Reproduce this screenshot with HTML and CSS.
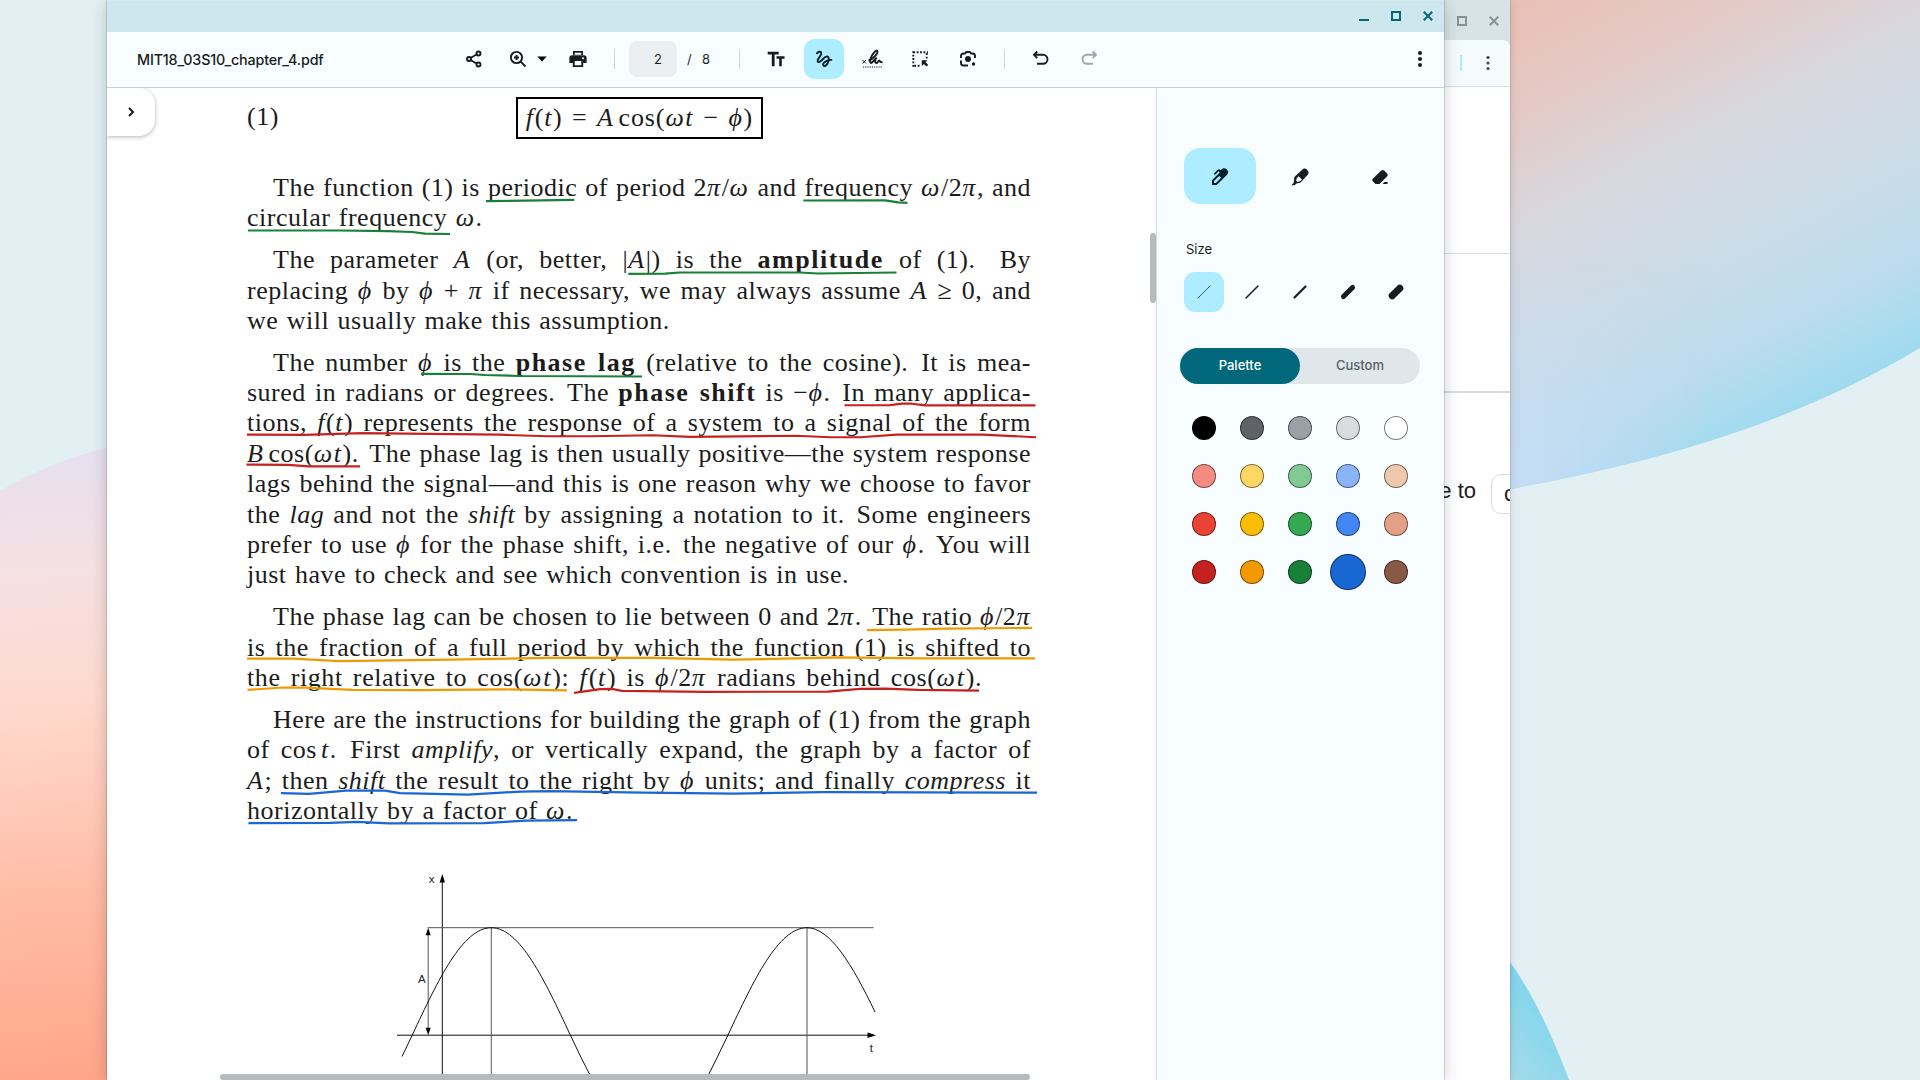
FILE: index.html
```html
<!DOCTYPE html>
<html lang="en">
<head>
<meta charset="utf-8">
<title>MIT18_03S10_chapter_4.pdf</title>
<link rel="stylesheet" href="styles.css">
</head>
<body>
<div class="desktop">
  <svg class="wallpaper" viewBox="0 0 1920 1080">
    <defs>
      <linearGradient id="wl" gradientUnits="userSpaceOnUse" x1="0" y1="470" x2="50" y2="1080">
        <stop offset="0" stop-color="#e8e0ee"/><stop offset=".18" stop-color="#f6e0e2"/><stop offset=".4" stop-color="#ffd8cc"/><stop offset=".7" stop-color="#ffbca6"/><stop offset="1" stop-color="#ffa68a"/>
      </linearGradient>
      <linearGradient id="wr" gradientUnits="userSpaceOnUse" x1="1530" y1="0" x2="1760" y2="440">
        <stop offset="0" stop-color="#e9c0b7"/><stop offset=".18" stop-color="#e5c9c4"/><stop offset=".4" stop-color="#d7d7de"/><stop offset=".62" stop-color="#cbdbe6"/><stop offset=".82" stop-color="#bcdcee"/><stop offset="1" stop-color="#9cdaef"/>
      </linearGradient>
      <linearGradient id="wb" gradientUnits="userSpaceOnUse" x1="1560" y1="1010" x2="1500" y2="1060">
        <stop offset="0" stop-color="#7fd4ec"/><stop offset="1" stop-color="#a2dbea"/>
      </linearGradient>
      <linearGradient id="wv" gradientUnits="userSpaceOnUse" x1="1510" y1="0" x2="1720" y2="0">
        <stop offset="0" stop-color="#c8dcf6" stop-opacity=".8"/><stop offset="1" stop-color="#c8dcf6" stop-opacity="0"/>
      </linearGradient>
      <linearGradient id="wm" gradientUnits="userSpaceOnUse" x1="0" y1="260" x2="0" y2="480">
        <stop offset="0" stop-color="#000"/><stop offset="1" stop-color="#fff"/>
      </linearGradient>
      <mask id="fade"><path fill="url(#wm)" d="M1500 0h420v500h-420z"/></mask>
    </defs>
    <path fill="url(#wl)" d="M0 491Q52 461 106 448L130 444V1080H0Z"/>
    <path fill="url(#wr)" d="M1500 0H1920V348Q1840 396 1740 431Q1640 466 1500 491Z"/>
    <path fill="url(#wv)" mask="url(#fade)" d="M1500 0H1920V348Q1840 396 1740 431Q1640 466 1500 491Z"/>
    <path fill="url(#wb)" d="M1500 950L1510 962Q1541 1005 1569 1080H1500Z"/>
  </svg>

  <section class="window back">
    <div class="back-title">
      <svg class="ctl" viewBox="0 0 10 10"><path d="M1 1h8v8H1z"/></svg>
      <svg class="ctl" viewBox="0 0 10 10"><path d="M.8 .8l8.4 8.4M9.2 .8L.8 9.2"/></svg>
    </div>
    <div class="back-bar"><i class="accent"></i><svg class="dots" viewBox="0 0 4 16"><circle cx="2" cy="2.5" r="1.6"/><circle cx="2" cy="8" r="1.6"/><circle cx="2" cy="13.5" r="1.6"/></svg></div>
    <div class="back-head"></div>
    <div class="back-mid"></div>
    <div class="back-row"><span>e to</span><span class="chip">c</span></div>
  </section>

  <section class="window front">
    <header class="titlebar">
      <svg class="ctl" viewBox="0 0 10 10"><path d="M0 9h10"/></svg>
      <svg class="ctl" viewBox="0 0 10 10"><path d="M1 1h8v8H1z"/></svg>
      <svg class="ctl" viewBox="0 0 10 10"><path d="M.8 .8l8.4 8.4M9.2 .8L.8 9.2"/></svg>
    </header>

    <nav class="toolbar">
      <span class="filename">MIT18_03S10_chapter_4.pdf</span>
      <svg class="icon share" viewBox="0 0 20 20"><path class="ln" d="M6.500 9l6-3.500M6.500 11l6 3.500"/><circle class="ln" cx="5" cy="10" r="2"/><circle class="ln" cx="14.500" cy="4.500" r="2"/><circle class="ln" cx="14.500" cy="15.500" r="2"/></svg>
      <svg class="icon zoom" viewBox="0 0 20 20"><circle class="ln" cx="8.500" cy="8.500" r="5.600"/><path class="ln" d="M12.700 12.700l4.800 4.800M8.500 6v5M6 8.500h5"/></svg>
      <svg class="caret" viewBox="0 0 10 6"><path d="M.3 .5h9.400L5 5.500z"/></svg>
      <svg class="icon print" viewBox="0 0 20 20"><path fill-rule="evenodd" d="M5 2h10v4.500H5zM6.700 3.700v2h6.600v-2zM4 6.200h12a2.600 2.600 0 0 1 2.600 2.600V14H15.200v4H4.800v-4H1.400V8.800A2.600 2.600 0 0 1 4 6.200zM6.700 12v4.200h6.600V12zM15 8.200a1 1 0 1 0 0 2 1 1 0 0 0 0-2z"/></svg>
      <i class="sep sep1"></i>
      <span class="page-input">2</span><span class="slash">/</span><span class="total">8</span>
      <i class="sep sep2"></i>
      <svg class="icon tt" viewBox="0 0 20 20"><path d="M1.700 2.800h11v2.700H8.600v11.700H5.800V5.500H1.700zM10.500 7.300h8v2.400h-2.700v7.500h-2.600V9.700h-2.700z"/></svg>
      <span class="tool-on"><svg class="icon" viewBox="0 0 20 20"><path class="ln" d="M2.600 5C4 2.200 7 2 7.300 4.200 7.700 7 2.500 9.800 3.800 12.600 5.500 15.600 11.500 5.300 14 7.800c2.800 2.900-2.300 11.200-4.500 8.800-1.900-2.300 3.300-6.200 8.700-5.700"/></svg></span>
      <svg class="icon sign" viewBox="0 0 22 20"><path class="thin" d="M1.500 11l3.500 3.500M5 11l-3.500 3.500"/><path class="ln" d="M7.500 11.500C12 10.500 17.500 4.200 16.300 1.900 14.500-.4 8.300 9.500 9.300 13.300c1.200 2.600 4.300-3.500 6.200-4.600-1.700 2.300-1.800 5.300.2 5.300 1.300 0 1.500-2.500 2.500-2.500.7 0 .2 2.200 3.300 1.600"/><path class="dotline" d="M2 18h19"/></svg>
      <svg class="icon select" viewBox="0 0 20 20"><path class="dash" d="M3.300 2.300V18M3.300 3.200H18M16.700 4.300V10M4.300 16.700H10"/><path d="M11.800 11.300h5.700l-1.900 1.900 2.600 2.600-1.700 1.700-2.600-2.600-2.100 2.100z"/></svg>
      <svg class="icon lens" viewBox="0 0 20 20"><path class="ln" d="M3 9V7a2.500 2.500 0 0 1 2.500-2.500H7L8.300 3h3.400L13 4.500h1.500A2.500 2.500 0 0 1 17 7v2M3 11.500V14a2.500 2.500 0 0 0 2.500 2.500H10"/><circle cx="10" cy="10" r="3"/><circle cx="15.500" cy="15" r="1.700"/></svg>
      <i class="sep sep3"></i>
      <svg class="icon undo" viewBox="0 0 20 20"><path class="ln" d="M6.300 2.500L3 5.800l3.300 3.300M3.200 5.800H12a4.500 4.500 0 0 1 0 9H6"/></svg>
      <svg class="icon redo" viewBox="0 0 20 20"><path class="ln" d="M13.700 2.500L17 5.800l-3.300 3.300M16.800 5.800H8a4.500 4.500 0 0 0 0 9h6"/></svg>
      <svg class="icon more" viewBox="0 0 20 20"><circle cx="10" cy="4" r="2"/><circle cx="10" cy="10" r="2"/><circle cx="10" cy="16" r="2"/></svg>
    </nav>

    <div class="body">
      <main class="doc">
        <div class="tab"><svg viewBox="0 0 10 10"><path d="M3 1l4 4-4 4"/></svg></div>
        <div class="page">
          <div class="equation"><span>(1)</span><span class="boxed"><i>f</i>(<i>t</i>) = <i>A</i><span class="thinsp"></span>cos(<i>ωt</i> − <i>ϕ</i>)</span></div>
          <p>
            <span class="line in">The function (1) is periodic of period 2<i>π</i>/<i>ω</i> and frequency <i>ω</i>/2<i>π</i>, and</span>
            <span class="line end">circular frequency <i>ω</i>.</span>
          </p>
          <p>
            <span class="line in">The parameter <i>A</i> (or, better, |<i>A</i>|) is the <b>amplitude</b> of (1). <span class="s big">By</span></span>
            <span class="line">replacing <i>ϕ</i> by <i>ϕ</i> + <i>π</i> if necessary, we may always assume <i>A</i> ≥ 0, and</span>
            <span class="line end">we will usually make this assumption.</span>
          </p>
          <p>
            <span class="line in">The number <i>ϕ</i> is the <b>phase lag</b> (relative to the cosine). <span class="s">It</span> is mea-</span>
            <span class="line">sured in radians or degrees. <span class="s">The</span> <b>phase shift</b> is −<i>ϕ</i>. <span class="s">In</span> many applica-</span>
            <span class="line">tions, <i>f</i>(<i>t</i>) represents the response of a system to a signal of the form</span>
            <span class="line"><i>B</i><span class="thinsp"></span>cos(<i>ωt</i>). <span class="s">The</span> phase lag is then usually positive—the system response</span>
            <span class="line">lags behind the signal—and this is one reason why we choose to favor</span>
            <span class="line">the <em>lag</em> and not the <em>shift</em> by assigning a notation to it. <span class="s">Some</span> engineers</span>
            <span class="line">prefer to use <i>ϕ</i> for the phase shift, i.e. <span class="s">the</span> negative of our <i>ϕ</i>. <span class="s">You</span> will</span>
            <span class="line end">just have to check and see which convention is in use.</span>
          </p>
          <p>
            <span class="line in">The phase lag can be chosen to lie between 0 and 2<i>π</i>. <span class="s">The</span> ratio <i>ϕ</i>/2<i>π</i></span>
            <span class="line">is the fraction of a full period by which the function (1) is shifted to</span>
            <span class="line end wide">the right relative to cos(<i>ωt</i>): <i>f</i>(<i>t</i>) is <i>ϕ</i>/2<i>π</i> radians behind cos(<i>ωt</i>).</span>
          </p>
          <p>
            <span class="line in">Here are the instructions for building the graph of (1) from the graph</span>
            <span class="line">of cos<span class="thinsp"></span><i>t</i>. <span class="s">First</span> <em>amplify</em>, or vertically expand, the graph by a factor of</span>
            <span class="line"><i>A</i>; then <em>shift</em> the result to the right by <i>ϕ</i> units; and finally <em>compress</em> it</span>
            <span class="line end">horizontally by a factor of <i>ω</i>.</span>
          </p>
          <svg class="graph" viewBox="390 866 500 214">
            <path d="M442.300 880V1080M397 1035.200H870"/>
            <path class="grey" d="M427.500 927.700H873.600M428.200 934V1029M491.300 928V1080M807 928V1080"/>
            <path d="M402 1056.500L412.300 1035C438.100 979.900 462.700 927.700 491.300 927.700S544.500 979.900 570.300 1035Q580 1056 593 1081M705.500 1081Q718 1056 728 1035C753.800 979.900 778.400 927.700 807 927.700C830 927.700 852.300 964.600 875 1012"/>
            <path class="tip" d="M442.300 874l2.700 8.500h-5.400zM876 1035.200l-8.500-2.700v5.400zM428.200 927.700l2.500 7.500h-5zM428.200 1035.200l2.500-7.500h-5z"/>
            <text x="428.800" y="883">x</text><text x="418" y="983">A</text><text x="869.800" y="1052">t</text>
          </svg>
        </div>
        <svg class="ink" viewBox="107 88 1049 992">
          <path class="green" d="M486 201.200L574.300 199.900M248 230.500L340 230.500 388 231.200 412 232 425 233.700 450 234M803.300 200.500L885 200.300 898 202.300 907.500 202.800M628.300 273.800L665 273.600 680 272.500 800 272.500 818 273.500 896.500 272.500M421 373.800L470 374 485 375 520 376 642 376.500"/>
          <g transform="matrix(1 0 0 1.0067 0 -2.680)">
            <path class="red" d="M844.500 405.200L890 405 902 403.700 912 403.700 925 405.300 1035.500 405.300M247 434.400L304 434.700 362 433 452 434 500 434.500 547.600 436 590 436 653 435 690 436.600 796 435.500 830 437 860 437 897 434.300 982 434.300 1036 437M246.500 464.200L288 464.500 309 466 360 466M574 691L600 687.200 612 687 622 689 706 690 828 689.600 860 687 885 686.700 918 688 979 688.700"/>
            <path class="orange" d="M867 628.500L905 628 945 627 1032 626.400M247 657L293.500 656.800 338.500 659.300 450 658 548 656.200 653 656.200 733 658 839 655.700 920 656.700 1035 656.700M247.500 688L283 685.600 305 685.700 352 688 420 688.300 505 687.500 567 688.500"/>
            <path class="blue" d="M281 790.500L309 791.200 346 788 385 788 400 790.500 468 792 521 789 550 788.500 643 790 733 791 823 789.600 1037 790M248.500 820.300L330 820 357 819 389 820.500 484 820.300 526 817.800 577 817.300"/>
          </g>
        </svg>
        <i class="vscroll"></i><i class="hscroll"></i>
      </main>

      <aside class="panel">
        <div class="tools">
          <span class="tool on"><svg class="icon" viewBox="0 0 20 20"><path fill-rule="evenodd" d="M2 18v-4.700l7.800-7.800L8.600 4.300 5 7.900 3.800 6.700 7.900 2.600a1.500 1.500 0 0 1 1.800 0l.9.700.8-.7A3.700 3.700 0 0 1 16.800 8L6.700 18zM4 14.100V16h1.900l5.200-5.200-1.900-1.900z"/></svg></span>
          <span class="tool"><svg class="icon" viewBox="0 0 20 20"><path fill-rule="evenodd" d="M1.300 18.300L3.800 15.800a2 2 0 0 1 .1-1.500L4.400 10 12.200 2.800a3.500 3.500 0 0 1 5 .2 3.500 3.500 0 0 1 .3 5L10.300 15.700l-3.900.8-1.800 1.800zM8.700 9.200L6.700 11.200l-.5 2.700 1.600 1.100 2.500-.9 1.700-1.700z"/></svg></span>
          <span class="tool"><svg class="icon" viewBox="0 0 20 20"><path d="M5.500 17L3 14.400a2 2 0 0 1 0-3L11.300 3.600a2 2 0 0 1 2.800 0l3 3a2 2 0 0 1 0 2.800L9.400 17zM12.500 17l2-2H17.500v2z"/></svg></span>
        </div>
        <div class="label">Size</div>
        <div class="sizes">
          <span class="size on"><svg viewBox="0 0 20 20"><path class="w1" d="M4 16L16 4"/></svg></span>
          <span class="size"><svg viewBox="0 0 20 20"><path class="w2" d="M4 16L16 4"/></svg></span>
          <span class="size"><svg viewBox="0 0 20 20"><path class="w3" d="M4.500 15.500L15.500 4.500"/></svg></span>
          <span class="size"><svg viewBox="0 0 20 20"><path class="w4" d="M5.500 14.500L14.500 5.500"/></svg></span>
          <span class="size"><svg viewBox="0 0 20 20"><path class="w5" d="M6.200 13.800L13.800 6.200"/></svg></span>
        </div>
        <div class="segment"><span class="seg on">Palette</span><span class="seg">Custom</span></div>
        <div class="swatches">
          <i class="c1"></i><i class="c2"></i><i class="c3"></i><i class="c4"></i><i class="c5"></i>
          <i class="c6"></i><i class="c7"></i><i class="c8"></i><i class="c9"></i><i class="c10"></i>
          <i class="c11"></i><i class="c12"></i><i class="c13"></i><i class="c14"></i><i class="c15"></i>
          <i class="c16"></i><i class="c17"></i><i class="c18"></i><i class="c19 picked"></i><i class="c20"></i>
        </div>
      </aside>
    </div>
  </section>
</div>
</body>
</html>
```
FILE: styles.css
```css
* { box-sizing: border-box; }
body { margin: 0; font-family: Inter, "Liberation Sans", sans-serif; color: #171d1e; }
.desktop { position: relative; width: 1920px; height: 1080px; overflow: hidden; background: #e2f0f4; }
.wallpaper { position: absolute; inset: 0; width: 1920px; height: 1080px; }
svg { display: block; flex: none; }

.window { position: absolute; top: 0; height: 1080px; display: flex; flex-direction: column; overflow: hidden; }
.ctl { width: 10px; height: 10px; fill: none; stroke: currentColor; stroke-width: 2; }

/* window behind */
.back { left: 1300px; width: 210px; background: #fff; box-shadow: 0 0 0 1px rgba(0,0,0,.1), 0 0 10px rgba(0,0,0,.12); }
.back-title { height: 40px; background: #d7e3e7; display: flex; justify-content: flex-end; gap: 22px; padding: 16px 11px 0 0; color: #879391; box-shadow: 0 10px 0 #d7e3e7; }
.back-bar { position: relative; height: 47px; background: #f5fafd; border-top-right-radius: 7px; border-bottom: 1px solid #d5e0e3; display: flex; justify-content: flex-end; align-items: center; gap: 24px; padding: 0 20px 0 0; }
.accent { width: 2px; height: 16px; background: #aeecff; }
.dots { width: 4px; height: 16px; fill: #40484b; }
.back-head { height: 167px; border-bottom: 1px solid #dadce0; }
.back-mid { height: 139px; border-bottom: 2px solid #dadce0; }
.back-row { display: flex; justify-content: flex-end; margin-top: 81px; height: 40px; font: 22px/34px "Liberation Sans", sans-serif; color: #202124; }
.back-row > span { flex: none; }
.back-row .chip { width: 40px; height: 40px; margin: 0 -21px 0 15px; border: 1px solid #dadce0; border-radius: 10px; padding-left: 12px; line-height: 37px; }

/* main window */
.front { left: 107px; width: 1337px; background: #f8fdff; box-shadow: 0 0 0 1px rgba(0,0,0,.12), 0 2px 16px rgba(0,0,0,.2); }
.titlebar { height: 32px; flex: none; background: #cee7ee; border-top: 1px solid #d6eaf0; display: flex; justify-content: flex-end; gap: 22px; padding: 10px 11px 0 0; color: #00687a; }
.toolbar { height: 56px; flex: none; border-bottom: 1px solid #c7cfd2; display: flex; align-items: center; padding: 0 14px 1px 30px; }
.icon { width: 20px; height: 20px; fill: currentColor; }
.ln { fill: none; stroke: currentColor; stroke-width: 1.9; }
.thin { fill: none; stroke: currentColor; stroke-width: 1; }
.dotline { fill: none; stroke: currentColor; stroke-width: 1.2; stroke-dasharray: 1.2 1; }
.dash { fill: none; stroke: currentColor; stroke-width: 1.9; stroke-dasharray: 1.8 1.6; }
.filename { width: 327px; font-size: 14.300px; font-weight: 450; letter-spacing: -.15px; white-space: nowrap; }
.zoom { margin-left: 24px; }
.caret { width: 10px; height: 6px; margin-left: 9px; }
.print { margin-left: 21px; }
.sep { width: 1px; height: 20px; background: #cdd6d9; }
.sep1 { margin-left: 26px; }
.page-input { width: 48px; height: 36px; margin-left: 14px; border-radius: 8px; background: #ebeff2; font-size: 13px; line-height: 36px; text-align: right; padding-right: 15px; }
.slash { font-size: 13px; margin-left: 10px; width: 15px; }
.total { font-size: 13px; width: 11px; }
.sep2 { margin-left: 26px; }
.tt { margin-left: 26px; }
.tool-on { width: 40px; height: 40px; margin-left: 18px; border-radius: 11px; background: #aeecff; display: grid; place-items: center; color: #001f26; }
.sign { width: 22px; margin-left: 17px; }
.select { margin-left: 27px; }
.lens { margin-left: 28px; }
.sep3 { margin-left: 26px; }
.undo { margin-left: 26px; }
.redo { margin-left: 28px; opacity: .38; }
.more { margin-left: auto; }

.body { flex: 1; display: flex; min-height: 0; }
.doc { position: relative; width: 1049px; background: #fff; overflow: hidden; }
.tab { position: absolute; left: 0; top: 0; width: 48px; height: 48px; border-radius: 0 16px 16px 0; background: #fff; box-shadow: 0 1px 4px rgba(0,0,0,.3); display: grid; place-items: center; }
.tab svg { width: 10px; height: 10px; fill: none; stroke: #171d1e; stroke-width: 2; }
.page { width: 784px; margin-left: 140px; font-family: "Liberation Serif", serif; font-size: 26px; line-height: 30.400px; letter-spacing: .5px; color: #1c1c1c; }
.page i { letter-spacing: 1.600px; }
.page b { letter-spacing: 1.500px; }
.equation { height: 51px; margin-bottom: 34px; padding-top: 9px; display: flex; align-items: flex-start; line-height: 37px; }
.equation > span:first-child { width: 269px; padding-top: 1px; }
.boxed { width: 247px; height: 42px; border: 2px solid #000; white-space: nowrap; text-align: center; word-spacing: 2px; letter-spacing: .9px; }
.page p { margin: 0 0 11.300px; }
.line { display: block; white-space: nowrap; text-align-last: justify; }
.in { padding-left: 26px; }
.end { text-align-last: left; word-spacing: 1.400px; }
.wide { word-spacing: 3px; letter-spacing: .6px; }
.page .wide i { letter-spacing: 1.900px; }
.s { margin-left: 2.500px; }
.big { margin-left: 9px; }
.thinsp { display: inline-block; width: 4px; }
.graph { width: 500px; height: 214px; margin: 40px 0 0 143px; fill: none; stroke: #111; stroke-width: 1; overflow: visible; }
.graph .grey { stroke: #555; }
.graph .tip { fill: #000; stroke: none; }
.graph text { fill: #222; stroke: none; font: 11.500px "Liberation Sans", sans-serif; letter-spacing: 0; }
.ink { position: absolute; left: 0; top: 0; width: 1049px; height: 992px; fill: none; stroke-width: 2.200; stroke-linejoin: round; }
.green { stroke: #188038; }
.red { stroke: #c5221f; }
.orange { stroke: #f29900; }
.blue { stroke: #1967d2; }
.vscroll { position: absolute; right: 0; top: 145px; width: 6px; height: 70px; border-radius: 3px; background: #b5bcbf; }
.hscroll { position: absolute; left: 113px; bottom: 0; width: 810px; height: 6px; border-radius: 3px; background: #b5bcbf; }

.panel { width: 288px; border-left: 1px solid #d3dbde; padding: 60px 23px 0; }
.tools { display: flex; gap: 8px; padding-left: 4px; }
.tool { width: 72px; height: 56px; border-radius: 16px; display: grid; place-items: center; padding-top: 1px; }
.on { background: #aeecff; color: #001f26; }
.label { margin: 36px 0 0 6px; height: 32px; font-size: 13px; line-height: 18px; }
.sizes { display: flex; gap: 8px; padding-left: 4px; }
.size { width: 40px; height: 40px; border-radius: 11px; display: grid; place-items: center; }
.size svg { width: 20px; height: 20px; stroke: #171d1e; stroke-linecap: round; }
.size .w1 { stroke-width: 1; stroke: #3b6470; }
.w2 { stroke-width: 1.500; }
.w3 { stroke-width: 2.200; }
.w4 { stroke-width: 5.200; }
.w5 { stroke-width: 7px; }
.segment { display: flex; width: 240px; height: 36px; margin-top: 36px; border-radius: 18px; background: #e0e7ea; }
.seg { width: 120px; line-height: 35px; border-radius: 18px; text-align: center; font-size: 13px; font-weight: 500; color: #526266; }
.seg.on { background: #00687a; color: #fff; }
.swatches { display: grid; grid-template-columns: repeat(5, 48px); grid-auto-rows: 48px; margin-top: 20px; place-items: center; }
.swatches i { width: 24px; height: 24px; border-radius: 50%; border: 1px solid rgba(0,0,0,.5); background-clip: border-box; }
.swatches .picked { width: 36px; height: 36px; }
.c1 { background: #000; } .c2 { background: #5f6368; } .c3 { background: #9aa0a6; } .c4 { background: #dadce0; } .c5 { background: #fff; }
.c6 { background: #f28b82; } .c7 { background: #fdd663; } .c8 { background: #81c995; } .c9 { background: #8ab4f8; } .c10 { background: #eec9ae; }
.c11 { background: #ea4335; } .c12 { background: #fbbc04; } .c13 { background: #34a853; } .c14 { background: #4285f4; } .c15 { background: #e2a185; }
.c16 { background: #c5221f; } .c17 { background: #f29900; } .c18 { background: #188038; } .c19 { background: #1967d2; } .c20 { background: #885945; }
```
